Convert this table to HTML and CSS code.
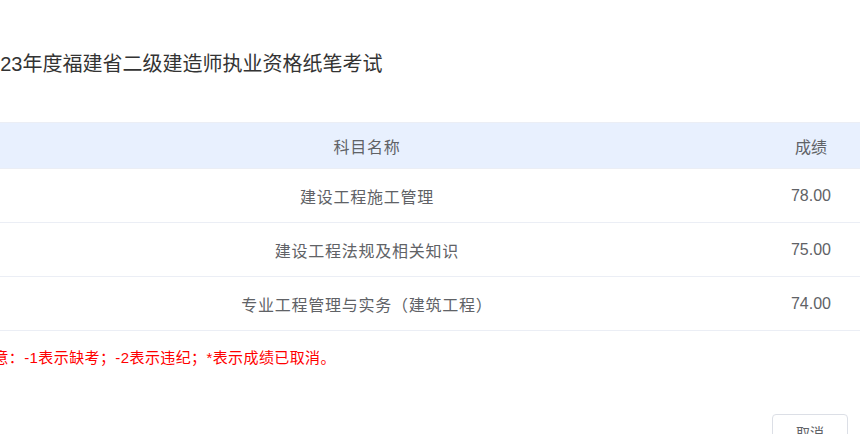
FILE: index.html
```html
<!DOCTYPE html>
<html lang="zh-CN">
<head>
<meta charset="utf-8">
<title>成绩查询</title>
<link rel="stylesheet" href="styles.css">
</head>
<body>
<div class="dialog">
  <h2 class="title">2023年度福建省二级建造师执业资格纸笔考试</h2>
  <table class="scores">
    <thead>
      <tr><th class="name">科目名称</th><th class="score">成绩</th></tr>
    </thead>
    <tbody>
      <tr><td class="name">建设工程施工管理</td><td class="score">78.00</td></tr>
      <tr><td class="name">建设工程法规及相关知识</td><td class="score">75.00</td></tr>
      <tr><td class="name">专业工程管理与实务（建筑工程）</td><td class="score">74.00</td></tr>
    </tbody>
  </table>
  <p class="note">注意：-1表示缺考；-2表示违纪；*表示成绩已取消。</p>
  <div class="footer">
    <button class="btn" type="button">取消</button>
  </div>
</div>
</body>
</html>
```

FILE: styles.css
```css
html, body {
  margin: 0;
  padding: 0;
  overflow: hidden;
  background: #fff;
}
body {
  width: 860px;
  height: 434px;
  font-family: "Liberation Sans", "Noto Sans CJK SC", sans-serif;
  text-spacing-trim: space-all;
}
.dialog {
  margin-left: -22px;
  width: 888px;
  padding-top: 50px;
}
.title {
  margin: 0;
  font-size: 20px;
  line-height: 28px;
  font-weight: normal;
  color: #333;
}
.scores {
  margin-top: 44px;
  width: 100%;
  border-collapse: collapse;
  font-size: 16px;
  color: #606266;
}
.scores th,
.scores td {
  padding: 0;
  text-align: center;
  font-weight: normal;
  border-bottom: 1px solid #ebeef5;
}
.scores th {
  height: 45px;
  background: #e8f0fe;
  border-top: 1px solid #ebeef5;
}
.scores td {
  height: 53px;
}
.scores .name {
  letter-spacing: 0.75px;
}
.scores .score {
  width: 110px;
}
.note {
  margin: 17px 0 0;
  font-family: "Liberation Sans", "Noto Sans CJK TC", sans-serif;
  font-size: 15px;
  letter-spacing: 0.4px;
  line-height: 20px;
  color: #ff0000;
}
.footer {
  margin-top: 46px;
  display: flex;
  justify-content: flex-end;
  padding-right: 18px;
}
.btn {
  width: 76px;
  height: 36px;
  border: 1px solid #dcdfe6;
  border-radius: 4px;
  background: #fff;
  font-family: inherit;
  font-size: 14px;
  color: #606266;
  padding: 0;
}
```
